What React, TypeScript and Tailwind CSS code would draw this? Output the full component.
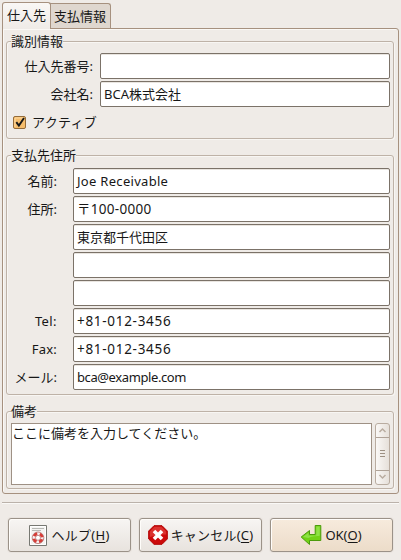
import type { ReactNode } from "react";

function Group({ title, className, children }: { title: string; className: string; children: ReactNode }) {
  return (
    <section className={"rounded-[3px] border border-[#beb2a7] shadow-[inset_1px_1px_0_#f8f6f3,1px_1px_0_#f8f6f3] " + className}>
      <h2 className="relative -mt-[11px] ml-1 h-5 w-fit bg-[#efebe7] leading-5">{title}</h2>
      {children}
    </section>
  );
}

function Field({ label, value, labelClass, tracking = "" }: { label: string; value: string; labelClass: string; tracking?: string }) {
  return (
    <label className="flex h-[26px] items-center">
      <span className={"shrink-0 text-right whitespace-nowrap " + labelClass}>{label}</span>
      <span className={"flex h-[26px] flex-1 items-center rounded-[2px] border border-[#7b7268] bg-white pl-[3px] whitespace-pre shadow-[inset_0_1px_0_#e9e5e0] " + tracking}>{value}</span>
    </label>
  );
}

function HelpIcon() {
  return (
    <svg className="-ml-px shrink-0" width="20" height="23" viewBox="0 0 20 23">
      <path d="M1.5 1.5h17v20h-17z" fill="#f5f4f2" stroke="#777872" />
      <path d="M2.5 2.5h15v18h-15z" fill="none" stroke="#fff" />
      <path d="M4 4.5h12M4 6.5h9" stroke="#b8b9b5" />
      <circle cx="10" cy="13.8" r="4.2" fill="none" stroke="#f7eeee" strokeWidth="3.4" />
      <circle cx="10" cy="13.8" r="4.2" fill="none" stroke="#d93b36" strokeWidth="3" strokeDasharray="3.9 2.7" strokeDashoffset="-1.4" />
      <circle cx="10" cy="13.8" r="5.8" fill="none" stroke="#aa6260" strokeWidth=".7" />
      <circle cx="10" cy="13.8" r="2.5" fill="#fff" stroke="#aa6260" strokeWidth=".7" />
    </svg>
  );
}

function CancelIcon() {
  return (
    <svg className="shrink-0" width="20" height="20" viewBox="0 0 20 20">
      <path d="M6 .7h8L19.3 6v8L14 19.3H6L.7 14V6z" fill="#cc0a0a" stroke="#b00000" />
      <path d="M6.5 1.8h7L18.2 6.5v3Q10 9 1.8 12V6.5z" fill="#e34843" opacity=".65" />
      <path d="m6 6 8 8m0-8-8 8" stroke="#fff" strokeWidth="3.6" />
    </svg>
  );
}

function ReturnIcon() {
  return (
    <svg className="-ml-px shrink-0" width="22" height="22" viewBox="0 0 22 22">
      <path d="M15.2 1.5h5.6v15H9.5v4L1.2 13l8.3-6.5v4h5.7z" fill="#73d216" stroke="#4b9a0c" strokeLinejoin="round" />
      <path d="M16.3 2.6h3.4v9.2c-3 .8-7 0-11.2 2.1L3 13l5.5-4.3v2.9h7.8z" fill="#9be85a" opacity=".7" />
    </svg>
  );
}

function DialogButton({ icon, label, letter, primary = false, tracking = "" }: { icon: ReactNode; label: string; letter: string; primary?: boolean; tracking?: string }) {
  return (
    <button className={"flex h-[34px] w-[123px] items-center justify-center rounded-[3px] border border-[#9b9288] shadow-[inset_1px_1px_0_#fffdfa,0_0_0_1px_#e9e4df] " + (primary ? "bg-linear-to-b from-[#f7ebdd] to-[#ecdcc9]" : "bg-linear-to-b from-[#f7f5f3] to-[#e8e3de]")}>
      {icon}
      <span className={"ml-[3px] whitespace-nowrap " + tracking}>{label}(<span className="underline underline-offset-2">{letter}</span>)</span>
    </button>
  );
}

export default function App() {
  const idLabel = "w-[87px] mr-[6px] pr-px";
  const addressLabel = "w-[50px] mr-[16px]";
  return (
    <main className="h-[560px] w-[401px] overflow-hidden bg-[#efebe7] pt-[2px] pl-[2px] font-['Noto_Sans','Noto_Sans_CJK_JP',sans-serif] text-[13px] leading-5 text-[#171717]">
      <nav className="relative z-10 flex h-[27px] items-end">
        <div className="h-[27px] w-[49px] rounded-t-[3px] border border-b-0 border-[#a6917f] bg-linear-to-b from-[#f9f7f5] to-[#efebe7] pt-[2px] pl-1">仕入先</div>
        <div className="mb-px -ml-px h-[25px] w-[61px] rounded-tr-[3px] border border-b-0 border-[#a6917f] bg-[#dfd7cf] pt-[2px] pl-[3px]">支払情報</div>
      </nav>
      <div className="-mt-px h-[466px] w-[397px] rounded-tr-[3px] rounded-b-[3px] border border-[#a6917f] px-[3px] pt-3 shadow-[inset_1px_1px_0_#faf8f5]">
        <Group title="識別情報" className="h-[98px] w-[388px]">
          <div className="mt-[2px] mr-[3px] flex flex-col gap-[2px]">
            <Field label="仕入先番号:" value="" labelClass={idLabel} />
            <Field label="会社名:" value="BCA株式会社" labelClass={idLabel} />
          </div>
          <div className="mt-[5px] ml-[6px] flex h-5 items-center">
            <svg width="13" height="13" viewBox="0 0 13 13">
              <rect x=".5" y=".5" width="12" height="12" rx="1.5" fill="#f5bd6c" stroke="#946b39" />
              <path d="M2 11V2h9" fill="none" stroke="#ffd99f" />
              <path d="m3.3 6.1 2.6 3.5L11 2" fill="none" stroke="#171717" strokeWidth="1.9" />
            </svg>
            <span className="ml-[6px] tracking-[0.3px]">アクティブ</span>
          </div>
        </Group>
        <Group title="支払先住所" className="mt-4 h-[240px] w-[388px]">
          <div className="mt-[3px] mr-[3px] flex flex-col gap-[2px]">
            <Field label="名前:" value="Joe Receivable" labelClass={addressLabel} tracking="tracking-[0.3px]" />
            <Field label="住所:" value="〒100-0000" labelClass={addressLabel} tracking="text-[13.5px] tracking-[0.3px]" />
            <Field label="" value="東京都千代田区" labelClass={addressLabel} />
            <Field label="" value="" labelClass={addressLabel} />
            <Field label="" value="" labelClass={addressLabel} />
            <Field label="Tel:" value="+81-012-3456" labelClass={addressLabel + " tracking-[0.4px]"} tracking="text-[13.5px] tracking-[0.7px]" />
            <Field label="Fax:" value="+81-012-3456" labelClass={addressLabel + " tracking-[0.2px]"} tracking="text-[13.5px] tracking-[0.7px]" />
            <Field label="メール:" value="bca@example.com" labelClass={addressLabel} tracking="tracking-[-0.4px]" />
          </div>
        </Group>
        <Group title="備考" className="mt-4 h-[78px] w-[388px]">
          <div className="mt-[2px] mr-[3px] ml-1 flex h-[62px] justify-between">
            <div className="w-[361px] border border-[#9e9185] bg-white leading-[18px]">ここに備考を入力してください。</div>
            <div className="flex w-[15px] flex-col rounded-[3px] border border-[#b9aca0] bg-linear-to-r from-[#faf8f6] to-[#e6e0da]">
              <svg width="13" height="60" viewBox="0 0 13 60" fill="none">
                <path d="m3.5 8 3-3 3 3m-6 43 3 3 3-3" stroke="#b9aca0" strokeWidth="1.5" />
                <path d="M0 13.5h13M0 46.5h13" stroke="#afa297" />
                <path d="M4 26.5h5m-5 3h5m-5 3h5" stroke="#9d9083" />
              </svg>
            </div>
          </div>
        </Group>
      </div>
      <hr className="mt-2 h-[2px] w-[397px] border-0 border-t border-[#bbb2aa] bg-[#faf9f7]" />
      <footer className="mt-[14px] ml-[6px] flex gap-2">
        <DialogButton icon={<HelpIcon />} label="ヘルプ" letter="H" tracking="tracking-[0.3px]" />
        <DialogButton icon={<CancelIcon />} label="キャンセル" letter="C" tracking="tracking-[0.2px]" />
        <DialogButton icon={<ReturnIcon />} label="OK" letter="O" primary />
      </footer>
    </main>
  );
}
